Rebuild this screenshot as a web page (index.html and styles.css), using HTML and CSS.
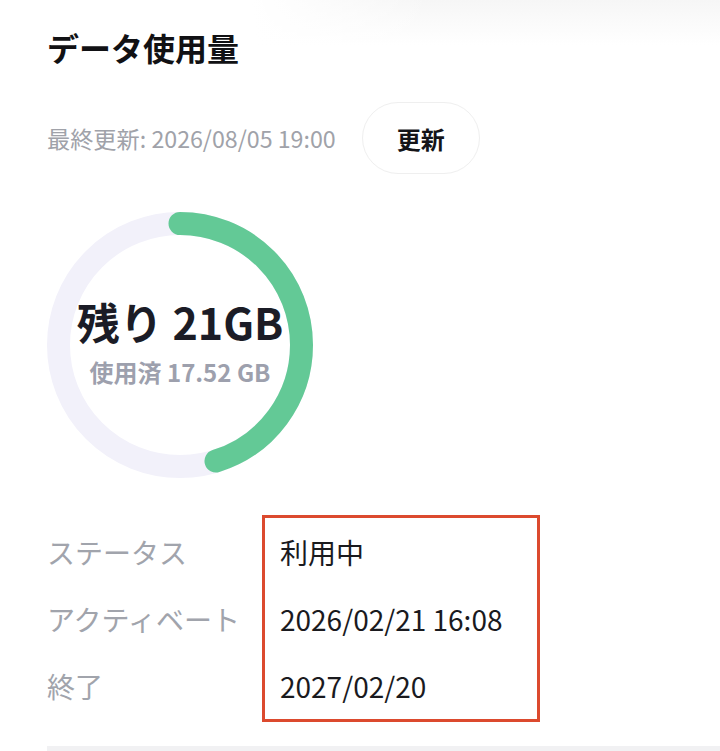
FILE: index.html
```html
<!DOCTYPE html>
<html lang="ja">
<head>
<meta charset="utf-8">
<title>データ使用量</title>
<link rel="stylesheet" href="styles.css">
</head>
<body>
<main class="usage">
  <h1 class="title">データ使用量</h1>
  <div class="update-row">
    <span class="updated">最終更新: 2026/08/05 19:00</span>
    <button class="refresh" type="button">更新</button>
  </div>
  <div class="gauge">
    <svg class="ring" viewBox="0 0 266 266" width="266" height="266" aria-hidden="true">
      <circle cx="133" cy="133" r="121.5" fill="none" stroke="#f2f1fa" stroke-width="23"/>
      <circle cx="133" cy="133" r="121.5" fill="none" stroke="#63c996" stroke-width="23" stroke-linecap="round" stroke-dasharray="345 800" transform="rotate(-90 133 133)"/>
    </svg>
    <div class="gauge-text">
      <div class="remain">残り 21GB</div>
      <div class="used">使用済 17.52 GB</div>
    </div>
  </div>
  <div class="details">
    <div class="labels">
      <div class="row">ステータス</div>
      <div class="row">アクティベート</div>
      <div class="row">終了</div>
    </div>
    <div class="values">
      <div class="row">利用中</div>
      <div class="row">2026/02/21 16:08</div>
      <div class="row">2027/02/20</div>
    </div>
  </div>
  <div class="divider"></div>
</main>
</body>
</html>
```
FILE: styles.css
```css
html, body {
  margin: 0;
  padding: 0;
}
body {
  width: 720px;
  min-height: 751px;
  font-family: "Noto Sans CJK JP", "Noto Sans", sans-serif;
  color: #17171c;
  background:
    linear-gradient(90deg, #ffffff 35%, rgba(255,255,255,0) 60%),
    linear-gradient(180deg, #f6f6f6 0px, #ffffff 45px);
  overflow: hidden;
}
.usage {
  padding: 27px 0 0 47px;
}
.title {
  margin: 0;
  font-size: 32px;
  line-height: 40px;
  font-weight: 700;
  color: #111114;
}
.update-row {
  display: flex;
  align-items: center;
  margin-top: 35px;
}
.updated {
  font-size: 23.2px;
  line-height: 32px;
  color: #a0a2a9;
}
.refresh {
  margin-left: 26px;
  width: 118px;
  height: 72px;
  border: 1.5px solid #efefef;
  border-radius: 36px;
  background: #ffffff;
  font-family: inherit;
  font-size: 24px;
  font-weight: 700;
  color: #141418;
  padding: 0;
}
.gauge {
  display: grid;
  width: 266px;
  height: 266px;
  margin-top: 38px;
}
.ring, .gauge-text {
  grid-area: 1 / 1;
}
.ring {
  display: block;
}
.gauge-text {
  place-self: center;
  text-align: center;
  padding-bottom: 6px;
}
.remain {
  font-size: 43px;
  line-height: 46px;
  font-weight: 700;
  color: #1b1c26;
  white-space: nowrap;
}
.used {
  margin-top: 14px;
  font-size: 24px;
  line-height: 28px;
  font-weight: 700;
  color: #9da0ad;
  white-space: nowrap;
}
.details {
  display: flex;
  margin-top: 37px;
}
.labels {
  width: 215px;
  padding-top: 3px;
}
.row {
  height: 67px;
  display: flex;
  align-items: center;
  white-space: nowrap;
}
.labels .row {
  font-size: 28px;
  color: #a1a4ac;
}
.values {
  box-sizing: border-box;
  width: 278px;
  border: 3px solid #dc4a2e;
  padding-left: 15px;
}
.values .row {
  font-size: 28px;
  color: #1a1a1e;
}
.divider {
  margin-top: 24px;
  height: 6px;
  background: #f1f1f3;
}
```
